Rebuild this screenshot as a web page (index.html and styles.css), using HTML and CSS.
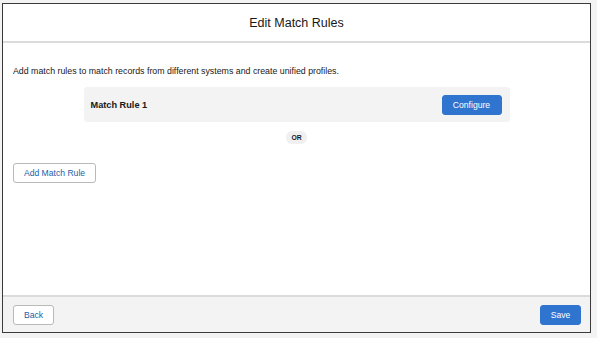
FILE: index.html
```html
<!DOCTYPE html>
<html lang="en">
<head>
    <meta charset="UTF-8">
    <meta name="viewport" content="width=device-width, initial-scale=1.0">
    <title>Edit Match Rules</title>
    <link rel="stylesheet" href="styles.css">
</head>
<body>
    <div class="modal">
        <!-- Header -->
        <div class="modal-header">
            <h1>Edit Match Rules</h1>
        </div>

        <!-- Body -->
        <div class="modal-body">
            <p class="intro">Add match rules to match records from different systems and create unified profiles.</p>
            <div class="rule-card">
                <span class="rule-name">Match Rule 1</span>
                <button class="button brand">Configure</button>
            </div>
            <div class="or-row"><span class="or-pill">OR</span></div>
            <button class="button neutral add-rule">Add Match Rule</button>
        </div>

        <!-- Footer -->
        <div class="modal-footer">
            <button class="button neutral">Back</button>
            <button class="button brand">Save</button>
        </div>
    </div>
</body>
</html>
```

FILE: styles.css
```css
html, body { height: 100%; }
body { margin: 0; padding: 3px 0 0 2px; box-sizing: border-box; background: #f3f3f3; font-family: "Liberation Sans", Arial, sans-serif; color: #181818; }
.modal { width: 589px; height: 330px; box-sizing: border-box; border: 1px solid #3a3a3a; background: #fff; display: flex; flex-direction: column; }
.modal-header { height: 37px; flex: none; display: flex; align-items: center; justify-content: center; border-bottom: 2px solid #dddbda; }
.modal-header h1 { margin: 0; font-size: 12.5px; font-weight: normal; }
.modal-body { flex: 1; padding: 22px 10px 0 10px; }
.intro { margin: 0; font-size: 8.8px; line-height: 12px; }
.rule-card { width: 426px; height: 35px; box-sizing: border-box; margin: 10px auto 0 auto; padding: 0 8px 0 7px; background: #f3f3f3; border-radius: 3px; display: flex; align-items: center; justify-content: space-between; }
.rule-name { font-size: 9.2px; font-weight: bold; }
.or-row { display: flex; justify-content: center; margin-top: 9px; }
.or-pill { font-size: 6.8px; font-weight: bold; background: #f0f0f0; border-radius: 6px; padding: 3px 5px; line-height: 7px; }
.button { font-family: inherit; font-size: 8.6px; height: 20px; padding: 0 10px; border-radius: 3px; cursor: pointer; }
.brand { background: #2f74cf; border: 1px solid #2f74cf; color: #fff; }
.neutral { background: #fff; border: 1px solid #b9b9b9; color: #1b5fa8; }
.rule-card .button { width: 60px; padding: 0; }
.add-rule { display: block; margin-top: 19px; width: 83px; padding: 0; }
.modal-footer { height: 37px; flex: none; box-sizing: border-box; border-top: 2px solid #dddbda; background: #f3f3f3; display: flex; align-items: center; justify-content: space-between; padding: 0 9px 0 10px; }
.modal-footer .button { width: 41px; padding: 0; }
```
